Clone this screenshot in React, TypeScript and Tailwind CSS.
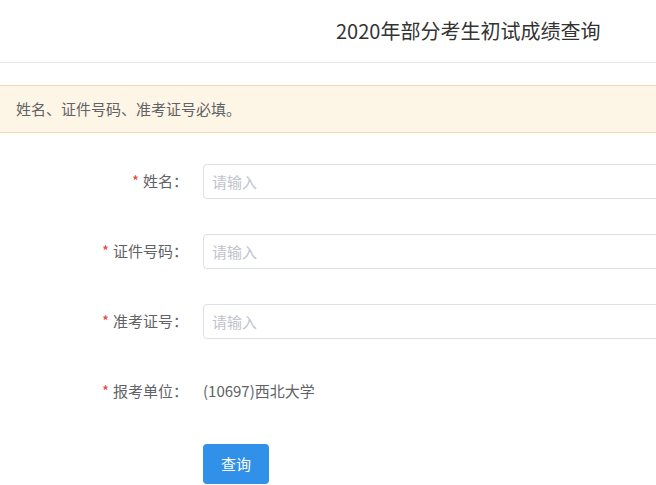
const fields = [
  { label: "姓名", placeholder: "请输入" },
  { label: "证件号码", placeholder: "请输入" },
  { label: "准考证号", placeholder: "请输入" },
];

function Label({ text }: { text: string }) {
  return (
    <div className="w-[188px] shrink-0 text-right text-[15px] text-[#606266]">
      <span className="mr-[4px] text-[#e0483e]">*</span>
      {text}：
    </div>
  );
}

export default function App() {
  return (
    <div
      className="h-[485px] w-[656px] overflow-hidden bg-white"
      style={{ fontFamily: '"Noto Sans CJK SC", "Noto Sans", sans-serif' }}
    >
      <div className="flex h-[63px] items-center border-b border-[#e6e6e6] pl-[336px]">
        <h1 className="whitespace-nowrap text-[20px] text-[#333333]">2020年部分考生初试成绩查询</h1>
      </div>

      <div className="mt-[22px] flex h-[48px] items-center border-y border-[#f5dab1] bg-[#fdf6e6] px-4 text-[15px] text-[#606266]">
        姓名、证件号码、准考证号必填。
      </div>

      <form className="mt-[31px] flex flex-col gap-[35px]" onSubmit={(e) => e.preventDefault()}>
        {fields.map((f) => (
          <div key={f.label} className="flex h-[35px] items-center">
            <Label text={f.label} />
            <input
              placeholder={f.placeholder}
              className="ml-[15px] h-[35px] w-[520px] shrink-0 rounded-[4px] border border-[#dcdfe6] px-2 text-[15px] text-[#606266] outline-none placeholder:text-[#c0c4cc]"
            />
          </div>
        ))}
        <div className="flex h-[35px] items-center">
          <Label text="报考单位" />
          <span className="ml-[15px] text-[15px] text-[#606266]">(10697)西北大学</span>
        </div>
        <div className="pl-[203px]">
          <button
            type="submit"
            className="h-[40px] w-[66px] rounded-[4px] bg-[#3190e8] text-[15px] text-white"
          >
            查询
          </button>
        </div>
      </form>
    </div>
  );
}
